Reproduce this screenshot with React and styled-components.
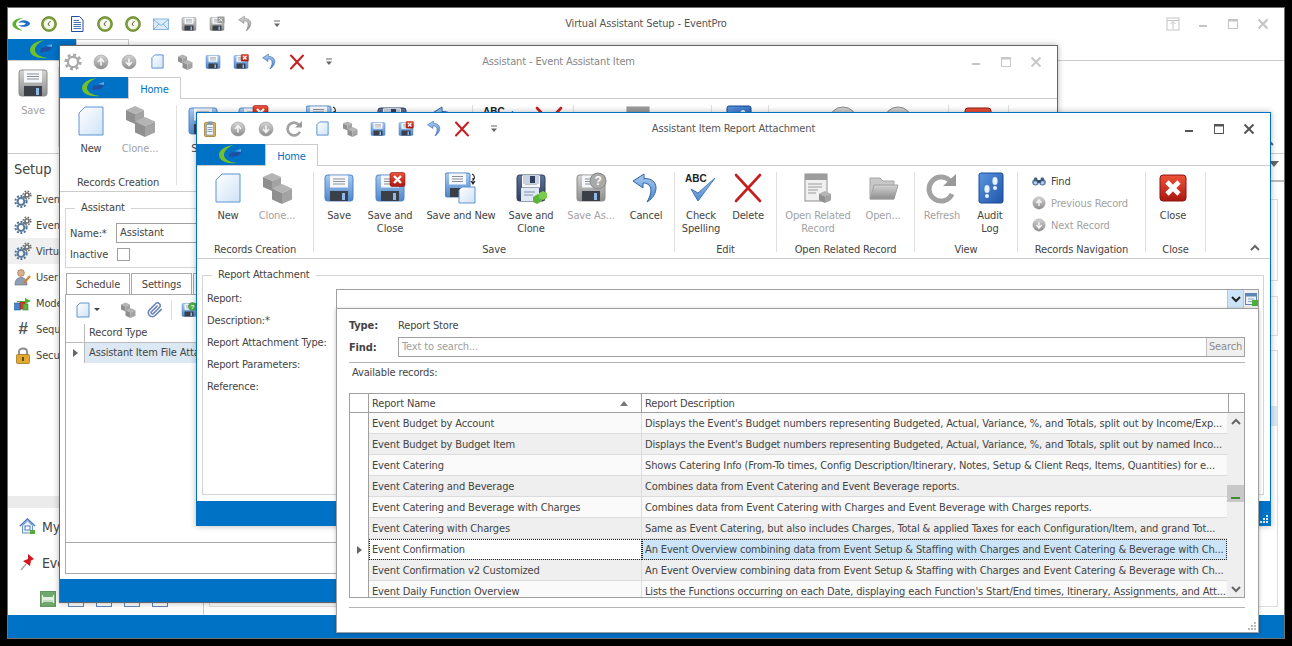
import React from 'react'
import styled, { createGlobalStyle } from 'styled-components'

const GlobalStyle = createGlobalStyle`
  html, body {
    margin: 0;
    padding: 0;
    background: #000;
    overflow: hidden;
  }
  * { box-sizing: border-box; }
`

const BLUE = '#0072c6'

/* ---------- icons ---------- */

const IconDefs = () => (
  <DefsHolder width="0" height="0">
    <defs>
      <linearGradient id="gPaper" x1="0" y1="0" x2="1" y2="1">
        <stop offset="0" stopColor="#ffffff" />
        <stop offset="1" stopColor="#cfe2f6" />
      </linearGradient>
      <linearGradient id="gBlue" x1="0" y1="0" x2="0" y2="1">
        <stop offset="0" stopColor="#a9cbef" />
        <stop offset="1" stopColor="#4d86cc" />
      </linearGradient>
      <linearGradient id="gGrey" x1="0" y1="0" x2="0" y2="1">
        <stop offset="0" stopColor="#d4d4d4" />
        <stop offset="1" stopColor="#8d8d8d" />
      </linearGradient>
      <linearGradient id="gDark" x1="0" y1="0" x2="0" y2="1">
        <stop offset="0" stopColor="#5f7296" />
        <stop offset="1" stopColor="#2f3e5e" />
      </linearGradient>
      <linearGradient id="gRed" x1="0" y1="0" x2="0" y2="1">
        <stop offset="0" stopColor="#ee5338" />
        <stop offset="1" stopColor="#a91810" />
      </linearGradient>
      <linearGradient id="gBook" x1="0" y1="0" x2="1" y2="1">
        <stop offset="0" stopColor="#5b95e0" />
        <stop offset="1" stopColor="#1f55a8" />
      </linearGradient>
    </defs>
  </DefsHolder>
)

const Svg = ({ size = 32, children }) => (
  <svg width={size} height={size} viewBox="0 0 32 32">{children}</svg>
)

const PaperIcon = ({ size }) => (
  <Svg size={size}>
    <path d="M10 2H28V30H4V8Z" fill="url(#gPaper)" stroke="#5d95d2" strokeWidth="1" vectorEffect="non-scaling-stroke" />
  </Svg>
)

const Cube = ({ x, y, s = 9 }) => (
  <g>
    <polygon points={`${x},${y + s * 0.45} ${x + s},${y} ${x + s * 2},${y + s * 0.45} ${x + s},${y + s * 0.9}`} fill="#b4b4b4" />
    <polygon points={`${x},${y + s * 0.45} ${x + s},${y + s * 0.9} ${x + s},${y + s * 2} ${x},${y + s * 1.55}`} fill="#8f8f8f" />
    <polygon points={`${x + s},${y + s * 0.9} ${x + s * 2},${y + s * 0.45} ${x + s * 2},${y + s * 1.55} ${x + s},${y + s * 2}`} fill="#a3a3a3" />
  </g>
)

const CubesIcon = ({ size }) => (
  <Svg size={size}>
    <Cube x={2} y={1} s={9} />
    <Cube x={11} y={12} s={10} />
  </Svg>
)

const Floppy = ({ size, tone = 'gBlue', edge = '#4f83c4', children }) => (
  <Svg size={size}>
    <rect x="2" y="3" width="28" height="26" rx="2.5" fill={`url(#${tone})`} stroke={edge} />
    <rect x="7" y="3.5" width="18" height="12" fill="#f5f7fa" />
    <path d="M10 7H22M10 9.5H22M10 12H22" stroke="#8b8f96" />
    <rect x="7" y="19" width="18" height="10" fill="#3a3f48" />
    <rect x="19" y="21" width="3" height="7" fill="#8fb8e4" />
    {children}
  </Svg>
)

const RedBadge = () => (
  <g>
    <rect x="16" y="0.5" width="15" height="14" rx="2" fill="url(#gRed)" stroke="#8d1410" strokeWidth=".6" />
    <path d="M20 4L27 11M27 4L20 11" stroke="#fff" strokeWidth="2.4" />
  </g>
)

const SaveIcon = ({ size }) => <Floppy size={size} />
const SaveDisabledIcon = ({ size }) => <Floppy size={size} tone="gGrey" edge="#8a8a8a" />
const SaveCloseIcon = ({ size }) => <Floppy size={size}><RedBadge /></Floppy>
const SaveCloseDisabledIcon = ({ size }) => (
  <Floppy size={size} tone="gGrey" edge="#8a8a8a">
    <rect x="17" y="1" width="14" height="13" fill="#9b9b9b" />
    <path d="M20 4L27 11M27 4L20 11" stroke="#eee" strokeWidth="2" />
  </Floppy>
)

const SaveNewIcon = ({ size }) => (
  <Svg size={size}>
    <rect x="0" y="1" width="25" height="24" rx="2" fill="url(#gBlue)" stroke="#4f83c4" />
    <rect x="4" y="1.5" width="17" height="11" fill="#f5f7fa" />
    <path d="M7 4.5H18M7 7H18M7 9.5H18" stroke="#8b8f96" />
    <rect x="5" y="16" width="13" height="9" fill="#3a3f48" />
    <path d="M17 15H30V31H14V18Z" fill="url(#gPaper)" stroke="#5d95d2" />
    <path d="M27 2C30 3 30 7 28 8M28 6V11M26 9L28 12L30 9" fill="none" stroke="#222" strokeWidth="1.1" />
  </Svg>
)

const SaveCloneIcon = ({ size }) => (
  <Floppy size={size} tone="gDark" edge="#2f3e5e">
    <rect x="6" y="16" width="18" height="13" fill="#dfe8f4" />
    <path d="M9 20H20M9 23H18" stroke="#7f90aa" />
    <rect x="8" y="3" width="16" height="9" fill="#c9d2df" />
    <rect x="15" y="4" width="5" height="7" fill="#2f3e5e" />
    <polygon points="18,25 23,22 27,24 27,29 22,32 18,30" fill="#5bb53a" />
    <polygon points="24,21 28,19 32,21 32,26 28,28 24,26" fill="#79cc4c" />
  </Floppy>
)

const SaveAsIcon = ({ size }) => (
  <Floppy size={size} tone="gGrey" edge="#8a8a8a">
    <circle cx="23" cy="9" r="8" fill="#a9a9a9" stroke="#888" />
    <text x="23" y="13" fontSize="12" fontWeight="700" textAnchor="middle" fill="#fff" fontFamily="Liberation Sans, sans-serif">?</text>
  </Floppy>
)

const SaveHelpIcon = ({ size }) => (
  <Floppy size={size} tone="gBlue">
    <circle cx="23" cy="9" r="8" fill="#52b447" stroke="#2f8a2a" />
    <text x="23" y="13" fontSize="12" fontWeight="700" textAnchor="middle" fill="#fff" fontFamily="Liberation Sans, sans-serif">?</text>
  </Floppy>
)

const UndoIcon = ({ size, disabled }) => (
  <Svg size={size}>
    <path
      d="M14 2L3 9L13 16V11C21 11 24 18 17 30C29 23 30 6 14 6.5Z"
      fill={disabled ? 'url(#gGrey)' : 'url(#gBlue)'}
      stroke={disabled ? '#888' : '#2b63ad'}
    />
  </Svg>
)

const CrossIcon = ({ size, width = 2.6 }) => (
  <Svg size={size}>
    <path d="M4 3L28 29M28 3L4 29" stroke="#c5201f" strokeWidth={width} strokeLinecap="round" fill="none" />
  </Svg>
)

const SpellIcon = ({ size }) => (
  <Svg size={size}>
    <text x="0" y="10" fontSize="10" fontWeight="700" letterSpacing="0" fill="#222" fontFamily="Liberation Sans, sans-serif">ABC</text>
    <path d="M6 17L13 29L30 6L13 21Z" fill="url(#gBlue)" stroke="#4078bb" />
  </Svg>
)

const RelatedIcon = ({ size }) => (
  <Svg size={size}>
    <rect x="3" y="2" width="22" height="27" fill="#f0f0f0" stroke="#8e8e8e" />
    <rect x="3" y="2" width="22" height="6" fill="#9c9c9c" />
    <path d="M6 12H20M6 15H20M6 18H16M6 21H14" stroke="#9a9a9a" />
    <Cube x={17} y={19} s={6} />
  </Svg>
)

const FolderIcon = ({ size }) => (
  <Svg size={size}>
    <path d="M3 6H13L16 9H27V27H3Z" fill="#c8c8c8" stroke="#a5a5a5" />
    <path d="M7 13H31L27 27H3Z" fill="url(#gGrey)" stroke="#a0a0a0" />
  </Svg>
)

const RefreshIcon = ({ size }) => (
  <Svg size={size}>
    <path d="M24 9A12 12 0 1 0 26 22" fill="none" stroke="#a2a2a2" strokeWidth="5" />
    <polygon points="17,14 30,14 30,2" fill="#999" />
  </Svg>
)

const AuditIcon = ({ size }) => (
  <Svg size={size}>
    <rect x="5" y="1" width="24" height="30" rx="2" fill="url(#gBook)" stroke="#174a94" />
    <ellipse cx="13" cy="17" rx="2.6" ry="4" fill="#e8f2ff" />
    <ellipse cx="13" cy="24" rx="2" ry="2" fill="#e8f2ff" />
    <ellipse cx="21" cy="9" rx="2.6" ry="4" fill="#e8f2ff" />
    <ellipse cx="21" cy="16" rx="2" ry="2" fill="#e8f2ff" />
  </Svg>
)

const CloseIcon = ({ size }) => (
  <Svg size={size}>
    <rect x="3" y="3" width="26" height="26" rx="3" fill="url(#gRed)" stroke="#8d1410" />
    <path d="M10 10L22 22M22 10L10 22" stroke="#fff" strokeWidth="4.6" />
  </Svg>
)

const RoundArrowIcon = ({ size, down }) => (
  <Svg size={size}>
    <circle cx="16" cy="16" r="14" fill="url(#gGrey)" stroke="#8a8a8a" />
    <path
      d={down ? 'M16 9V22M10 16L16 23L22 16' : 'M16 23V10M10 16L16 9L22 16'}
      fill="none"
      stroke="#f2f2f2"
      strokeWidth="3.4"
    />
  </Svg>
)

const BinocularsIcon = ({ size }) => (
  <Svg size={size}>
    <circle cx="8" cy="19" r="7.5" fill="#5f83ae" />
    <circle cx="24" cy="19" r="7.5" fill="#5f83ae" />
    <rect x="5" y="8" width="7" height="8" rx="2" fill="#41597a" />
    <rect x="20" y="8" width="7" height="8" rx="2" fill="#41597a" />
    <rect x="12" y="14" width="8" height="6" fill="#2f3e5e" />
    <circle cx="8" cy="20" r="3.5" fill="#bcd4ef" />
    <circle cx="24" cy="20" r="3.5" fill="#bcd4ef" />
  </Svg>
)

const ClockIcon = ({ size }) => (
  <Svg size={size}>
    <circle cx="16" cy="16" r="13" fill="#f4f7ea" stroke="#7fa23e" strokeWidth="5" />
    <circle cx="16" cy="16" r="14.6" fill="none" stroke="#55732a" />
    <path d="M19 10L14 16L17 20" fill="none" stroke="#333" strokeWidth="1.6" />
  </Svg>
)

const DocIcon = ({ size }) => (
  <Svg size={size}>
    <path d="M5 1H21L28 8V31H5Z" fill="#fff" stroke="#1e4fa0" strokeWidth="2" />
    <path d="M9 9H20M9 13H24M9 17H24M9 21H24M9 25H24" stroke="#1e4fa0" strokeWidth="1.6" />
  </Svg>
)

const MailIcon = ({ size }) => (
  <Svg size={size}>
    <rect x="1" y="6" width="30" height="21" fill="#dcebf9" stroke="#5d9bd5" strokeWidth="1.4" />
    <path d="M1 7L16 19L31 7M1 27L12 16M31 27L20 16" fill="none" stroke="#5d9bd5" strokeWidth="1.4" />
  </Svg>
)

const ClipboardIcon = ({ size }) => (
  <Svg size={size}>
    <rect x="5" y="3" width="22" height="28" rx="2" fill="#dcb05a" stroke="#9b6d1e" strokeWidth="1.4" />
    <rect x="9" y="7" width="14" height="21" fill="#eef4fb" stroke="#5d7fa8" />
    <rect x="11" y="1" width="10" height="6" rx="1" fill="#7f94ad" />
    <path d="M11 13H21M11 17H21M11 21H21" stroke="#4a6a90" strokeWidth="1.2" />
  </Svg>
)

const GearIcon = ({ size }) => (
  <Svg size={size}>
    <circle cx="16" cy="16" r="9" fill="none" stroke="#a8a8a8" strokeWidth="4" />
    <circle cx="16" cy="16" r="13" fill="none" stroke="#a8a8a8" strokeWidth="4.5" strokeDasharray="5.2 5" />
  </Svg>
)

const ChevronGlyph = ({ up, color = '#555', size = 12 }) => (
  <svg width={size} height={size} viewBox="0 0 12 12">
    <path d={up ? 'M2 8L6 4L10 8' : 'M2 4L6 8L10 4'} fill="none" stroke={color} strokeWidth="2" />
  </svg>
)

const QatArrow = () => (
  <svg width="8" height="8" viewBox="0 0 8 8">
    <path d="M1 1H7" stroke="#666" />
    <path d="M1 3.5H7L4 7Z" fill="#666" />
  </svg>
)

const Logo = () => (
  <svg width="28" height="21" viewBox="0 0 28 21">
    <path d="M17 1C8 2 2 6 2 11C2 17 10 20 20 19C12 18 7 15 7 11C7 7 11 3 17 1Z" fill="#73c02a" />
    <path d="M13 9L25 7L21 12L12 13Z" fill="#1f4e9e" />
    <path d="M18 7L24 5L24 8Z" fill="#5aa7e8" />
  </svg>
)

const AppLogo = () => (
  <svg width="20" height="18" viewBox="0 0 28 21">
    <path d="M17 2C8 2 2 6 2 11C2 15 7 19 16 20C11 17 7 14 7 11C7 7 11 4 17 2Z" fill="#5bb02c" />
    <path d="M10 9C14 4 23 4 27 10C23 15 15 16 10 12C14 13 18 12 21 10C18 8 14 8 10 9Z" fill="#1a6fc0" />
  </svg>
)

const GearsNavIcon = () => (
  <svg width="18" height="18" viewBox="0 0 18 18">
    <circle cx="7" cy="11.5" r="3.4" fill="none" stroke="#57789a" strokeWidth="2" />
    <circle cx="7" cy="11.5" r="5.6" fill="none" stroke="#57789a" strokeWidth="2" strokeDasharray="2 1.6" />
    <circle cx="13" cy="5" r="2" fill="none" stroke="#6b6b6b" strokeWidth="1.6" />
    <circle cx="13" cy="5" r="3.8" fill="none" stroke="#6b6b6b" strokeWidth="1.6" strokeDasharray="1.6 1.4" />
  </svg>
)

const UserNavIcon = () => (
  <svg width="18" height="18" viewBox="0 0 18 18">
    <circle cx="7" cy="5" r="3.4" fill="#d9b08c" stroke="#8a6a4a" strokeWidth=".6" />
    <path d="M1 17C1 11 4 9.5 7 9.5C10 9.5 13 11 13 17Z" fill="#8f9fb3" stroke="#5e6c7d" strokeWidth=".6" />
    <path d="M10 15L16 8" stroke="#d4802c" strokeWidth="2" />
  </svg>
)

const ModelNavIcon = () => (
  <svg width="18" height="18" viewBox="0 0 18 18">
    <rect x="0.5" y="9" width="6" height="7" fill="#3f86d4" stroke="#265f9e" strokeWidth=".6" />
    <rect x="6" y="8" width="6" height="7" fill="#cf3b30" stroke="#8f2018" strokeWidth=".6" />
    <rect x="9" y="10" width="5" height="6" fill="#5cb23d" stroke="#3a7f25" strokeWidth=".6" />
    <path d="M3 7H11V4L17 7L11 10V8H3Z" fill="#4cae3d" />
  </svg>
)

const HashGlyph = styled.span`
  font: italic 700 17px "Liberation Sans", sans-serif;
  color: #555;
  width: 18px;
  text-align: center;
`

const LockNavIcon = () => (
  <svg width="18" height="18" viewBox="0 0 18 18">
    <path d="M5 9V5.5C5 1.5 13 1.5 13 5.5V9" fill="none" stroke="#8b8b8b" strokeWidth="1.8" />
    <rect x="2.5" y="8.5" width="13" height="9" rx="1" fill="#e0a92f" stroke="#a5741a" strokeWidth=".8" />
    <rect x="8" y="11" width="2" height="4" fill="#6a4a10" />
  </svg>
)

const HomeIcon = () => (
  <svg width="17" height="17" viewBox="0 0 17 17">
    <path d="M1 8L8.5 1L16 8" fill="none" stroke="#4d7fc0" strokeWidth="1.6" />
    <path d="M3.5 7.5V15H13.5V7.5L8.5 3Z" fill="#e9f0f9" stroke="#6a8fc0" />
    <rect x="6" y="8" width="5" height="4" fill="#fff" stroke="#4d7fc0" />
    <rect x="11" y="12" width="5" height="4" fill="#57a93a" />
  </svg>
)

const PinIcon = () => (
  <svg width="17" height="19" viewBox="0 0 17 19">
    <path d="M2 17L7 11" stroke="#aaa" strokeWidth="1.4" />
    <path d="M9 1L15 6L12 7.5L11 13L4 8L9 6Z" fill="#d5161c" />
  </svg>
)

const BedIcon = () => (
  <svg width="16" height="16" viewBox="0 0 16 16">
    <rect width="16" height="16" rx="1.5" fill="#6fa86b" stroke="#4f834c" />
    <rect x="3" y="6" width="10" height="3" fill="#e4f1e2" />
    <path d="M2.5 4V12M13.5 4V12M2.5 10H13.5" stroke="#e4f1e2" strokeWidth="1.3" />
  </svg>
)

const ClipIcon = () => (
  <svg width="16" height="16" viewBox="0 0 24 24" fill="none" stroke="#6d85b5" strokeWidth="2.4" strokeLinecap="round" strokeLinejoin="round">
    <path d="m21.4 11.05-9.2 9.2a6 6 0 0 1-8.5-8.5l9.2-9.2a4 4 0 0 1 5.7 5.7l-9.2 9.2a2 2 0 0 1-2.8-2.8l8.5-8.5" />
  </svg>
)

const ComboGridIcon = () => (
  <svg width="13" height="13" viewBox="0 0 13 13">
    <rect x=".5" y=".5" width="11" height="11" fill="#eaf1f9" stroke="#5d86b8" />
    <rect x=".5" y=".5" width="11" height="3" fill="#5d86b8" />
    <path d="M3 6H9M3 8.5H9" stroke="#8ba6c6" />
    <rect x="7" y="7" width="6" height="6" fill="#4caf3a" />
  </svg>
)

const SizeGrip = styled.svg.attrs({ width: 9, height: 9, viewBox: '0 0 9 9' })`
  position: absolute;
  right: 2px;
  bottom: 2px;
`

const Grip = ({ color }) => (
  <SizeGrip>
    {[[7, 1], [4, 4], [7, 4], [1, 7], [4, 7], [7, 7]].map(([x, y]) => (
      <rect key={`${x}-${y}`} x={x} y={y} width="2" height="2" fill={color} />
    ))}
  </SizeGrip>
)

/* ---------- page ---------- */

const DefsHolder = styled.svg`
  position: absolute;
`

const Desktop = styled.div`
  position: relative;
  width: 1292px;
  height: 646px;
  background: #000;
  overflow: hidden;
  font-family: "DejaVu Sans Condensed", "DejaVu Sans", sans-serif;
  font-stretch: condensed;
  font-size: 11px;
  letter-spacing: -0.14px;
  color: #444;
`

const Win = styled.div`
  position: absolute;
  left: ${(p) => p.$left}px;
  top: ${(p) => p.$top}px;
  width: ${(p) => p.$w}px;
  height: ${(p) => p.$h}px;
  display: flex;
  flex-direction: column;
  background: #fff;
  border: 1px solid ${(p) => p.$edge};
  box-shadow: ${(p) => (p.$shadow ? '0 0 6px rgba(0, 0, 0, 0.3)' : 'none')};
  overflow: hidden;
`

const TitleRow = styled.div`
  flex: none;
  height: 31px;
  display: grid;
  grid-template-columns: 1fr auto 1fr;
  align-items: center;
`

const Qat = styled.div`
  display: flex;
  align-items: center;
  gap: 2px;
`

const QatItem = styled.div`
  width: 26px;
  height: 20px;
  display: flex;
  align-items: center;
  justify-content: center;
`

const QatMore = styled(QatItem)`
  margin-left: 4px;
`

const TitleText = styled.div`
  white-space: nowrap;
  color: ${(p) => p.$color};
`

const Controls = styled.div`
  display: flex;
  justify-content: flex-end;
  padding-right: 6px;
`

const Control = styled.div`
  width: 30px;
  height: 20px;
  display: flex;
  align-items: center;
  justify-content: center;
`

const CtlSvg = styled.svg.attrs({ width: 14, height: 14, viewBox: '0 0 14 14' })`
  fill: none;
  stroke: ${(p) => p.$color};
`

const PinControl = ({ color }) => (
  <CtlSvg $color={color}>
    <rect x="1" y="1" width="12" height="12" />
    <path d="M1 3.5H13M7 12V5M4.5 7L7 4.5L9.5 7" />
  </CtlSvg>
)

const MinControl = ({ color }) => (
  <CtlSvg $color={color}>
    <path d="M3 9H11" strokeWidth="2" />
  </CtlSvg>
)

const MaxControl = ({ color }) => (
  <CtlSvg $color={color}>
    <rect x="2.5" y="2.5" width="9" height="9" />
    <path d="M2.5 3.5H11.5" strokeWidth="2" />
  </CtlSvg>
)

const CloseControl = ({ color }) => (
  <CtlSvg $color={color}>
    <path d="M2.5 2.5L11.5 11.5M11.5 2.5L2.5 11.5" strokeWidth="2" />
  </CtlSvg>
)

const TabRow = styled.div`
  flex: none;
  height: 22px;
  display: flex;
  border-bottom: 1px solid #ccc;
`

const LogoBlock = styled.div`
  width: 68px;
  height: 21px;
  background: ${BLUE};
  display: flex;
  align-items: center;
  justify-content: center;
`

const HomeTab = styled.div`
  width: 53px;
  height: 22px;
  padding-top: 1px;
  border: 1px solid #ccc;
  border-bottom: none;
  background: #fff;
  color: ${BLUE};
  display: flex;
  align-items: center;
  justify-content: center;
`

const RibbonBar = styled.div`
  position: relative;
  flex: none;
  height: 93px;
  display: flex;
  align-items: flex-start;
  border-bottom: 1px solid #ccc;
`

const Group = styled.div`
  flex: none;
  width: ${(p) => p.$w}px;
  height: 80px;
  margin-top: 6px;
  display: flex;
  flex-direction: column;
  border-right: 1px solid #e0e0e0;
`

const GroupItems = styled.div`
  flex: 1;
  min-height: 0;
  display: flex;
  padding-left: ${(p) => p.$pad || 0}px;
`

const GroupLabel = styled.div`
  flex: none;
  height: 14px;
  line-height: 14px;
  margin-bottom: -5px;
  text-align: center;
  white-space: nowrap;
`

const RibbonBtn = styled.div`
  flex: none;
  width: ${(p) => p.$w}px;
  display: flex;
  flex-direction: column;
  align-items: center;
  color: ${(p) => (p.$off ? '#a2a2a2' : '#444')};
`

const BtnIcon = styled.div`
  height: 32px;
  display: flex;
  align-items: center;
`

const BtnLabel = styled.div`
  margin-top: 5px;
  line-height: 13px;
  text-align: center;
  white-space: nowrap;
`

const SmallStack = styled.div`
  display: flex;
  flex-direction: column;
  margin-top: -2px;
  padding-left: 14px;
`

const SmallBtn = styled.div`
  height: 22px;
  display: flex;
  align-items: center;
  gap: 5px;
  color: ${(p) => (p.$off ? '#a2a2a2' : '#444')};
`

const Collapse = styled.div`
  position: absolute;
  right: 9px;
  bottom: 4px;
  display: flex;
`

const StatusBar = styled.div`
  position: relative;
  flex: none;
  height: ${(p) => p.$h}px;
  background: ${BLUE};
`

const Ribbon = ({ groups, chevron }) => (
  <RibbonBar>
    {groups.map((g) => (
      <Group key={g.label || 'first'} $w={g.w}>
        <GroupItems $pad={g.pad}>
          {g.stack ? (
            <SmallStack>
              {g.stack.map((b) => (
                <SmallBtn key={b.label} $off={b.off}>{b.icon}{b.label}</SmallBtn>
              ))}
            </SmallStack>
          ) : (
            g.items.map((b) => (
              <RibbonBtn key={b.key || b.label} $w={b.w} $off={b.off}>
                <BtnIcon>{b.icon}</BtnIcon>
                <BtnLabel>{b.label.split('|').map((l) => <div key={l}>{l}</div>)}</BtnLabel>
              </RibbonBtn>
            ))
          )}
        </GroupItems>
        <GroupLabel>{g.label}</GroupLabel>
      </Group>
    ))}
    {chevron && <Collapse><ChevronGlyph up color="#666" /></Collapse>}
  </RibbonBar>
)

const recordsGroup = {
  label: 'Records Creation',
  w: 117,
  pad: 8,
  items: [
    { label: 'New', w: 46, icon: <PaperIcon /> },
    { label: 'Clone...', w: 52, off: true, icon: <CubesIcon /> },
  ],
}

const attachmentGroups = [
  recordsGroup,
  {
    label: 'Save',
    w: 361,
    pad: 5,
    items: [
      { label: 'Save', w: 40, icon: <SaveIcon /> },
      { label: 'Save and|Close', w: 62, icon: <SaveCloseIcon /> },
      { label: 'Save and New', w: 80, icon: <SaveNewIcon /> },
      { label: 'Save and|Clone', w: 60, icon: <SaveCloneIcon /> },
      { label: 'Save As...', w: 60, off: true, icon: <SaveAsIcon /> },
      { label: 'Cancel', w: 50, icon: <UndoIcon /> },
    ],
  },
  {
    label: 'Edit',
    w: 102,
    pad: 3,
    items: [
      { label: 'Check|Spelling', w: 46, icon: <SpellIcon /> },
      { label: 'Delete', w: 48, icon: <CrossIcon /> },
    ],
  },
  {
    label: 'Open Related Record',
    w: 138,
    pad: 3,
    items: [
      { label: 'Open Related|Record', w: 76, off: true, icon: <RelatedIcon /> },
      { label: 'Open...', w: 54, off: true, icon: <FolderIcon /> },
    ],
  },
  {
    label: 'View',
    w: 103,
    pad: 3,
    items: [
      { label: 'Refresh', w: 48, off: true, icon: <RefreshIcon /> },
      { label: 'Audit|Log', w: 48, icon: <AuditIcon /> },
    ],
  },
  {
    label: 'Records Navigation',
    w: 128,
    stack: [
      { label: 'Find', icon: <BinocularsIcon size={14} /> },
      { label: 'Previous Record', off: true, icon: <RoundArrowIcon size={14} /> },
      { label: 'Next Record', off: true, icon: <RoundArrowIcon size={14} down /> },
    ],
  },
  {
    label: 'Close',
    w: 60,
    pad: 4,
    items: [{ label: 'Close', w: 46, icon: <CloseIcon /> }],
  },
]

const assistantGroups = [
  recordsGroup,
  {
    label: 'Save',
    w: 296,
    pad: 6,
    items: [
      { label: 'Save', w: 40, icon: <SaveIcon /> },
      { label: 'Save and|Close', w: 60, icon: <SaveCloseIcon /> },
      { label: 'Save and New', w: 78, icon: <SaveNewIcon /> },
      { label: 'Save and|Clone', w: 62, icon: <SaveCloneIcon /> },
      { label: 'Cancel', w: 42, icon: <UndoIcon /> },
    ],
  },
  {
    label: 'Edit',
    w: 101,
    pad: 3,
    items: [
      { label: 'Check|Spelling', w: 46, icon: <SpellIcon /> },
      { label: 'Delete', w: 54, icon: <CrossIcon /> },
    ],
  },
  {
    label: 'Open Related Record',
    w: 138,
    items: [{ label: 'Open Related|Record', w: 132, off: true, icon: <RelatedIcon /> }],
  },
  {
    label: 'View',
    w: 57,
    items: [{ label: 'Audit|Log', w: 52, icon: <AuditIcon /> }],
  },
  {
    label: 'Records Navigation',
    w: 180,
    pad: 50,
    items: [
      { label: 'Previous|Record', w: 48, off: true, icon: <RoundArrowIcon /> },
      { label: 'Next|Record', w: 62, off: true, icon: <RoundArrowIcon down /> },
    ],
  },
  {
    label: 'Close',
    w: 60,
    pad: 4,
    items: [{ label: 'Close', w: 50, icon: <CloseIcon /> }],
  },
]

const mainGroups = [
  {
    label: '',
    w: 51,
    pad: 5,
    items: [{ label: 'Save', w: 40, off: true, icon: <SaveDisabledIcon /> }],
  },
]

const Titlebar = ({ quick, title, titleColor, controlColor, pinned }) => (
  <TitleRow>
    <Qat>
      {quick.map((icon, i) => <QatItem key={i}>{icon}</QatItem>)}
      <QatMore><QatArrow /></QatMore>
    </Qat>
    <TitleText $color={titleColor}>{title}</TitleText>
    <Controls>
      {pinned && <Control><PinControl color={controlColor} /></Control>}
      <Control><MinControl color={controlColor} /></Control>
      <Control><MaxControl color={controlColor} /></Control>
      <Control><CloseControl color={controlColor} /></Control>
    </Controls>
  </TitleRow>
)

const Tabs = () => (
  <TabRow>
    <LogoBlock><Logo /></LogoBlock>
    <HomeTab>Home</HomeTab>
  </TabRow>
)

/* ---------- main window: sidebar and right pane ---------- */

const MainBody = styled.div`
  flex: 1;
  min-height: 0;
  display: flex;
`

const Sidebar = styled.div`
  flex: none;
  width: 195px;
  display: flex;
  flex-direction: column;
`

const SideTitle = styled.div`
  height: 30px;
  padding-left: 6px;
  font-size: 14.5px;
  line-height: 31px;
  margin-bottom: 2px;
`

const NavItem = styled.div`
  height: 26px;
  display: flex;
  align-items: center;
  gap: 4px;
  padding-left: 6px;
  white-space: nowrap;
  background: ${(p) => (p.$on ? '#f0f0f0' : 'transparent')};
`

const SideGap = styled.div`
  flex: 1;
`

const SideBand = styled.div`
  flex: none;
  height: 12px;
  background: #ebebeb;
`

const SideLink = styled.div`
  flex: none;
  height: 36px;
  display: flex;
  align-items: center;
  gap: 6px;
  padding: 1px 0 0 11px;
  font-size: 14px;
`

const SideIcons = styled.div`
  flex: none;
  height: 35px;
  display: flex;
  align-items: flex-start;
  gap: 12px;
  padding: 11px 0 0 32px;
`

const MiniTile = styled.div`
  flex: none;
  width: 16px;
  height: 16px;
  border: 1px solid #5d86b8;
`

const RightPane = styled.div`
  flex: 1;
  min-width: 0;
  display: flex;
  flex-direction: column;
  border-left: 1px solid #ccc;
  padding: 0 6px 0 5px;
`

const PaneHead = styled.div`
  flex: none;
  height: 28px;
  margin: 0 -6px 0 -5px;
  padding: 7px 3px 0 0;
  display: flex;
  justify-content: flex-end;
  border-bottom: 2px solid #bbb;
`

const PaneArrow = styled.div`
  width: 0;
  height: 0;
  border-left: 5px solid transparent;
  border-right: 5px solid transparent;
  border-top: 6px solid #666;
  margin-right: 2px;
`

const PaneBox = styled.div`
  flex: none;
  height: ${(p) => p.$h}px;
  margin-top: ${(p) => p.$top}px;
  padding: ${(p) => p.$pad || 0}px 6px 0 0;
  border: 1px solid #ddd;
  display: flex;
  flex-direction: column;
  gap: 2px;
`

const PaneField = styled.div`
  height: 20px;
  border: 1px solid #bbb;
`

const PaneRow = styled.div`
  height: 20px;
  margin: 55px -6px 0 0;
  background: #dce8f3;
`

/* ---------- assistant window content ---------- */

const AssistantBody = styled.div`
  flex: 1;
  min-height: 0;
  display: flex;
  flex-direction: column;
  padding: 9px 5px 5px;
`

const Frame = styled.fieldset`
  margin: 0;
  min-width: 0;
  border: 1px solid #d4d4d4;
  padding: ${(p) => p.$pad};
  flex: ${(p) => (p.$grow ? '1' : 'none')};
`

const FrameTitle = styled.legend`
  margin-left: 5px;
  padding: 0 6px;
  line-height: 14px;
`

const FormRow = styled.div`
  height: 20px;
  display: flex;
  align-items: center;
  margin-bottom: 1px;
  &:last-child {
    margin-bottom: 1px;
  }
`

const FormLabel = styled.div`
  width: 46px;
  flex: none;
`

const TextBox = styled.div`
  width: 925px;
  height: 20px;
  border: 1px solid #a0a0a0;
  padding-left: 3px;
  line-height: 18px;
`

const CheckBox = styled.div`
  width: 13px;
  height: 13px;
  border: 1px solid #a0a0a0;
  margin-left: 1px;
`

const PageTabs = styled.div`
  flex: none;
  display: flex;
  gap: 1px;
  margin-top: 5px;
  padding-left: 1px;
  height: 21px;
`

const PageTab = styled.div`
  width: ${(p) => p.$w}px;
  border: 1px solid #aaa;
  border-bottom: none;
  display: flex;
  align-items: center;
  justify-content: center;
`

const PagePanel = styled.div`
  flex: 1;
  min-height: 0;
  display: flex;
  flex-direction: column;
  border: 1px solid #aaa;
`

const PageTools = styled.div`
  flex: none;
  height: 29px;
  display: flex;
  align-items: center;
  padding-left: 9px;
`

const ToolBtn = styled.div`
  display: flex;
  align-items: center;
  margin-right: ${(p) => p.$gap}px;
`

const ToolCaret = styled.div`
  width: 0;
  height: 0;
  border-left: 3px solid transparent;
  border-right: 3px solid transparent;
  border-top: 3px solid #444;
  margin-left: 3px;
`

const ToolSep = styled.div`
  width: 1px;
  height: 20px;
  background: #ddd;
  margin-right: ${(p) => p.$gap}px;
`

const RecordHead = styled.div`
  flex: none;
  display: flex;
  height: 19px;
  border-bottom: 1px solid #bbb;
`

const RecordGutter = styled.div`
  flex: none;
  width: 19px;
  border-right: 1px solid #bbb;
  display: flex;
  align-items: center;
  justify-content: center;
`

const RecordHeadCell = styled.div`
  padding-left: 4px;
  line-height: 18px;
`

const RecordRow = styled.div`
  flex: none;
  display: flex;
  height: 20px;
`

const RecordCell = styled.div`
  flex: 1;
  background: #dce8f3;
  padding-left: 4px;
  line-height: 20px;
  white-space: nowrap;
`

const PanelGap = styled.div`
  flex: 1;
`

const PanelFoot = styled.div`
  flex: none;
  height: 31px;
  border-top: 1px solid #aaa;
`

const RowArrow = styled.div`
  width: 0;
  height: 0;
  border-top: 4px solid transparent;
  border-bottom: 4px solid transparent;
  border-left: 5px solid #666;
`

/* ---------- attachment window content ---------- */

const AttachBody = styled.div`
  flex: 1;
  min-height: 0;
  display: flex;
  flex-direction: column;
  padding: 9px 6px 6px 5px;
`

const AttachRow = styled.div`
  height: 22px;
  line-height: 22px;
  white-space: nowrap;
`

const ComboBox = styled.div`
  position: absolute;
  left: 336px;
  top: 289px;
  width: 923px;
  height: 20px;
  display: flex;
  justify-content: flex-end;
  background: #fff;
  border: 1px solid #a0a0a0;
`

const ComboBtn = styled.div`
  width: ${(p) => p.$w}px;
  display: flex;
  align-items: center;
  justify-content: center;
  background: ${(p) => (p.$on ? '#cce4f7' : '#f0f0f0')};
  border-left: 1px solid #b4c8da;
`

const Popup = styled.div`
  position: absolute;
  left: 336px;
  top: 308px;
  width: 923px;
  height: 325px;
  padding: 7px 13px 0 12px;
  display: flex;
  flex-direction: column;
  background: #fff;
  border: 1px solid #a0a0a0;
  box-shadow: 0 1px 4px rgba(0, 0, 0, 0.25);
`

const PickRow = styled.div`
  flex: none;
  height: ${(p) => p.$h}px;
  margin-bottom: ${(p) => p.$mb || 0}px;
  display: flex;
  align-items: center;
`

const PickLabel = styled.div`
  width: 49px;
  flex: none;
  font-weight: 700;
`

const SearchBox = styled.div`
  flex: 1;
  height: 20px;
  display: flex;
  border: 1px solid #a0a0a0;
  color: #a0a0a0;
  line-height: 18px;
`

const SearchHint = styled.div`
  flex: 1;
  padding-left: 3px;
`

const SearchBtn = styled.div`
  flex: none;
  width: 38px;
  background: #f0f0f0;
  border-left: 1px solid #c0c0c0;
  text-align: center;
  color: #8a8a8a;
`

const Rule = styled.div`
  flex: none;
  height: 1px;
  background: #b4b4b4;
  margin-top: ${(p) => p.$top}px;
`

const AvailLabel = styled.div`
  flex: none;
  height: 17px;
  line-height: 17px;
  margin-top: 1px;
  padding-left: 3px;
`

const DataGrid = styled.div`
  flex: none;
  height: 205px;
  margin-top: 12px;
  display: flex;
  flex-direction: column;
  border: 1px solid #a0a0a0;
`

const GridHead = styled.div`
  flex: none;
  height: 19px;
  display: flex;
  border-bottom: 1px solid #a0a0a0;
`

const HeadCell = styled.div`
  width: ${(p) => p.$w}px;
  flex: ${(p) => (p.$w ? 'none' : '1')};
  display: flex;
  align-items: center;
  justify-content: space-between;
  padding: 1px 13px 0 3px;
  border-right: ${(p) => (p.$last ? 'none' : '1px solid #a0a0a0')};
`

const SortArrow = styled.div`
  width: 0;
  height: 0;
  border-left: 4px solid transparent;
  border-right: 4px solid transparent;
  border-bottom: 5px solid #777;
`

const GridBody = styled.div`
  flex: 1;
  min-height: 0;
  display: flex;
`

const Rows = styled.div`
  flex: 1;
  min-width: 0;
  overflow: hidden;
`

const Row = styled.div`
  height: 21px;
  display: flex;
`

const IndicatorCell = styled.div`
  flex: none;
  width: 19px;
  border-right: 1px solid #a0a0a0;
  display: flex;
  align-items: center;
  justify-content: center;
`

const Cell = styled.div`
  flex: ${(p) => (p.$w ? 'none' : '1')};
  width: ${(p) => p.$w}px;
  min-width: 0;
  padding-left: 3px;
  line-height: 21px;
  white-space: nowrap;
  overflow: hidden;
  background: ${(p) => (p.$sel ? p.$sel : p.$even ? '#efefef' : '#fafafa')};
  border-bottom: 1px solid #dcdcdc;
  border-right: ${(p) => (p.$w ? '1px solid #dcdcdc' : 'none')};
  outline: ${(p) => (p.$sel ? '1px dotted #222' : 'none')};
  outline-offset: -1px;
`

const ScrollColumn = styled.div`
  flex: none;
  width: 17px;
  display: flex;
  flex-direction: column;
  align-items: center;
  background: #efefef;
`

const ScrollEnd = styled.div`
  flex: none;
  height: 17px;
  display: flex;
  align-items: center;
  justify-content: center;
`

const ScrollTrack = styled.div`
  flex: 1;
  width: 100%;
  padding-top: 55px;
`

const ScrollThumb = styled.div`
  height: 17px;
  background: #c8c8c8;
  position: relative;
  &::after {
    content: "";
    position: absolute;
    left: 4px;
    right: 4px;
    bottom: 3px;
    height: 2px;
    background: #3f8f2e;
  }
`

const quickMain = [
  <AppLogo />, <ClockIcon size={16} />, <DocIcon size={16} />, <ClockIcon size={16} />, <ClockIcon size={16} />,
  <MailIcon size={16} />, <SaveDisabledIcon size={16} />, <SaveCloseDisabledIcon size={16} />, <UndoIcon size={17} disabled />,
]
const quickAssistant = [
  <GearIcon size={18} />, <RoundArrowIcon size={16} />, <RoundArrowIcon size={16} down />, <PaperIcon size={15} />, <CubesIcon size={16} />,
  <SaveIcon size={16} />, <SaveCloseIcon size={16} />, <UndoIcon size={17} />, <CrossIcon size={16} width={4} />,
]
const quickAttach = [
  <ClipboardIcon size={16} />, <RoundArrowIcon size={16} />, <RoundArrowIcon size={16} down />, <RefreshIcon size={17} />, <PaperIcon size={15} />,
  <CubesIcon size={16} />, <SaveIcon size={16} />, <SaveCloseIcon size={16} />, <UndoIcon size={17} />, <CrossIcon size={16} width={4} />,
]

const navItems = [
  { label: 'Event Setup', icon: <GearsNavIcon /> },
  { label: 'Event Types', icon: <GearsNavIcon /> },
  { label: 'Virtual Assistant', icon: <GearsNavIcon />, on: true },
  { label: 'User Setup', icon: <UserNavIcon /> },
  { label: 'Model Setup', icon: <ModelNavIcon /> },
  { label: 'Sequences', icon: <HashGlyph>#</HashGlyph> },
  { label: 'Security', icon: <LockNavIcon /> },
]

const reports = [
  ["Event Budget by Account", "Displays the Event's Budget numbers representing Budgeted, Actual, Variance, %, and Totals, split out by Income/Exp..."],
  ["Event Budget by Budget Item", "Displays the Event's Budget numbers representing Budgeted, Actual, Variance, %, and Totals, split out by named Inco..."],
  ["Event Catering", "Shows Catering Info (From-To times, Config Description/Itinerary, Notes, Setup & Client Reqs, Items, Quantities) for e..."],
  ["Event Catering and Beverage", "Combines data from Event Catering and Event Beverage reports."],
  ["Event Catering and Beverage with Charges", "Combines data from Event Catering with Charges and Event Beverage with Charges reports."],
  ["Event Catering with Charges", "Same as Event Catering, but also includes Charges, Total & applied Taxes for each Configuration/Item, and grand Tot..."],
  ["Event Confirmation", "An Event Overview combining data from Event Setup & Staffing with Charges and Event Catering & Beverage with Ch..."],
  ["Event Confirmation v2 Customized", "An Event Overview combining data from Event Setup & Staffing with Charges and Event Catering & Beverage with Ch..."],
  ["Event Daily Function Overview", "Lists the Functions occurring on each Date, displaying each Function's Start/End times, Itinerary, Assignments, and Att..."],
]

const MainWindow = () => (
  <Win $left={7} $top={7} $w={1278} $h={632} $edge="#707070">
    <Titlebar quick={quickMain} title="Virtual Assistant Setup - EventPro" titleColor="#555" controlColor="#c4c4c4" pinned />
    <Tabs />
    <Ribbon groups={mainGroups} chevron />
    <MainBody>
      <Sidebar>
        <SideTitle>Setup</SideTitle>
        {navItems.map((n) => (
          <NavItem key={n.label} $on={n.on}>{n.icon}{n.label}</NavItem>
        ))}
        <SideGap />
        <SideBand />
        <SideLink><HomeIcon />My Events</SideLink>
        <SideLink><PinIcon />Events</SideLink>
        <SideIcons>
          <BedIcon />
          <MiniTile />
          <MiniTile />
          <MiniTile />
          <MiniTile />
        </SideIcons>
      </Sidebar>
      <RightPane>
        <PaneHead><PaneArrow /></PaneHead>
        <PaneBox $top={17} $h={82} $pad={13}>
          <PaneField />
          <PaneField />
          <PaneField />
        </PaneBox>
        <PaneBox $top={15} $h={40} $pad={12}>
          <PaneField />
        </PaneBox>
        <PaneBox $top={14} $h={257}>
          <PaneRow />
        </PaneBox>
      </RightPane>
    </MainBody>
    <StatusBar $h={23} />
  </Win>
)

const AssistantWindow = () => (
  <Win $left={59} $top={45} $w={999} $h={558} $edge="#666" $shadow>
    <Titlebar quick={quickAssistant} title="Assistant - Event Assistant Item" titleColor="#888" controlColor="#c8c8c8" />
    <Tabs />
    <Ribbon groups={assistantGroups} />
    <AssistantBody>
      <Frame $pad="8px 4px 2px">
        <FrameTitle>Assistant</FrameTitle>
        <FormRow>
          <FormLabel>Name:*</FormLabel>
          <TextBox>Assistant</TextBox>
        </FormRow>
        <FormRow>
          <FormLabel>Inactive</FormLabel>
          <CheckBox />
        </FormRow>
      </Frame>
      <PageTabs>
        <PageTab $w={64}>Schedule</PageTab>
        <PageTab $w={61}>Settings</PageTab>
        <PageTab $w={64}>Notes</PageTab>
      </PageTabs>
      <PagePanel>
        <PageTools>
          <ToolBtn $gap={20}>
            <PaperIcon size={16} />
            <ToolCaret />
          </ToolBtn>
          <ToolBtn $gap={11}><CubesIcon size={16} /></ToolBtn>
          <ToolBtn $gap={8}><ClipIcon /></ToolBtn>
          <ToolSep $gap={9} />
          <ToolBtn $gap={8}><SaveHelpIcon size={16} /></ToolBtn>
          <ToolSep $gap={0} />
        </PageTools>
        <RecordHead>
          <RecordGutter />
          <RecordHeadCell>Record Type</RecordHeadCell>
        </RecordHead>
        <RecordRow>
          <RecordGutter><RowArrow /></RecordGutter>
          <RecordCell>Assistant Item File Attachment</RecordCell>
        </RecordRow>
        <PanelGap />
        <PanelFoot />
      </PagePanel>
    </AssistantBody>
    <StatusBar $h={23} />
  </Win>
)

const AttachmentWindow = () => (
  <Win $left={196} $top={112} $w={1075} $h={414} $edge={BLUE} $shadow>
    <Titlebar quick={quickAttach} title="Assistant Item Report Attachment" titleColor="#555" controlColor="#555" />
    <Tabs />
    <Ribbon groups={attachmentGroups} chevron />
    <AttachBody>
      <Frame $grow $pad="6px 4px 0">
        <FrameTitle>Report Attachment</FrameTitle>
        <AttachRow>Report:</AttachRow>
        <AttachRow>Description:*</AttachRow>
        <AttachRow>Report Attachment Type:</AttachRow>
        <AttachRow>Report Parameters:</AttachRow>
        <AttachRow>Reference:</AttachRow>
      </Frame>
    </AttachBody>
    <StatusBar $h={24}><Grip color="#dbe8f4" /></StatusBar>
  </Win>
)

const ReportPicker = () => (
  <>
    <ComboBox>
      <ComboBtn $w={16} $on><ChevronGlyph color="#222" /></ComboBtn>
      <ComboBtn $w={15}><ComboGridIcon /></ComboBtn>
    </ComboBox>
    <Popup>
      <PickRow $h={18} $mb={3}>
        <PickLabel>Type:</PickLabel>
        Report Store
      </PickRow>
      <PickRow $h={20}>
        <PickLabel>Find:</PickLabel>
        <SearchBox>
          <SearchHint>Text to search...</SearchHint>
          <SearchBtn>Search</SearchBtn>
        </SearchBox>
      </PickRow>
      <Rule $top={5} />
      <AvailLabel>Available records:</AvailLabel>
      <DataGrid>
        <GridHead>
          <HeadCell $w={19} />
          <HeadCell $w={273}>Report Name<SortArrow /></HeadCell>
          <HeadCell $w={587}>Report Description</HeadCell>
          <HeadCell $last />
        </GridHead>
        <GridBody>
          <Rows>
            {reports.map(([name, desc], i) => {
              const selected = i === 6
              return (
                <Row key={name}>
                  <IndicatorCell>{selected && <RowArrow />}</IndicatorCell>
                  <Cell $w={273} $even={i % 2 === 1} $sel={selected ? '#fff' : null}>{name}</Cell>
                  <Cell $even={i % 2 === 1} $sel={selected ? '#cce4f7' : null}>{desc}</Cell>
                </Row>
              )
            })}
          </Rows>
          <ScrollColumn>
            <ScrollEnd><ChevronGlyph up color="#666" /></ScrollEnd>
            <ScrollTrack><ScrollThumb /></ScrollTrack>
            <ScrollEnd><ChevronGlyph color="#666" /></ScrollEnd>
          </ScrollColumn>
        </GridBody>
      </DataGrid>
      <Rule $top={9} />
      <Grip color="#bbb" />
    </Popup>
  </>
)

export default function App() {
  return (
    <Desktop>
      <GlobalStyle />
      <IconDefs />
      <MainWindow />
      <AssistantWindow />
      <AttachmentWindow />
      <ReportPicker />
    </Desktop>
  )
}
